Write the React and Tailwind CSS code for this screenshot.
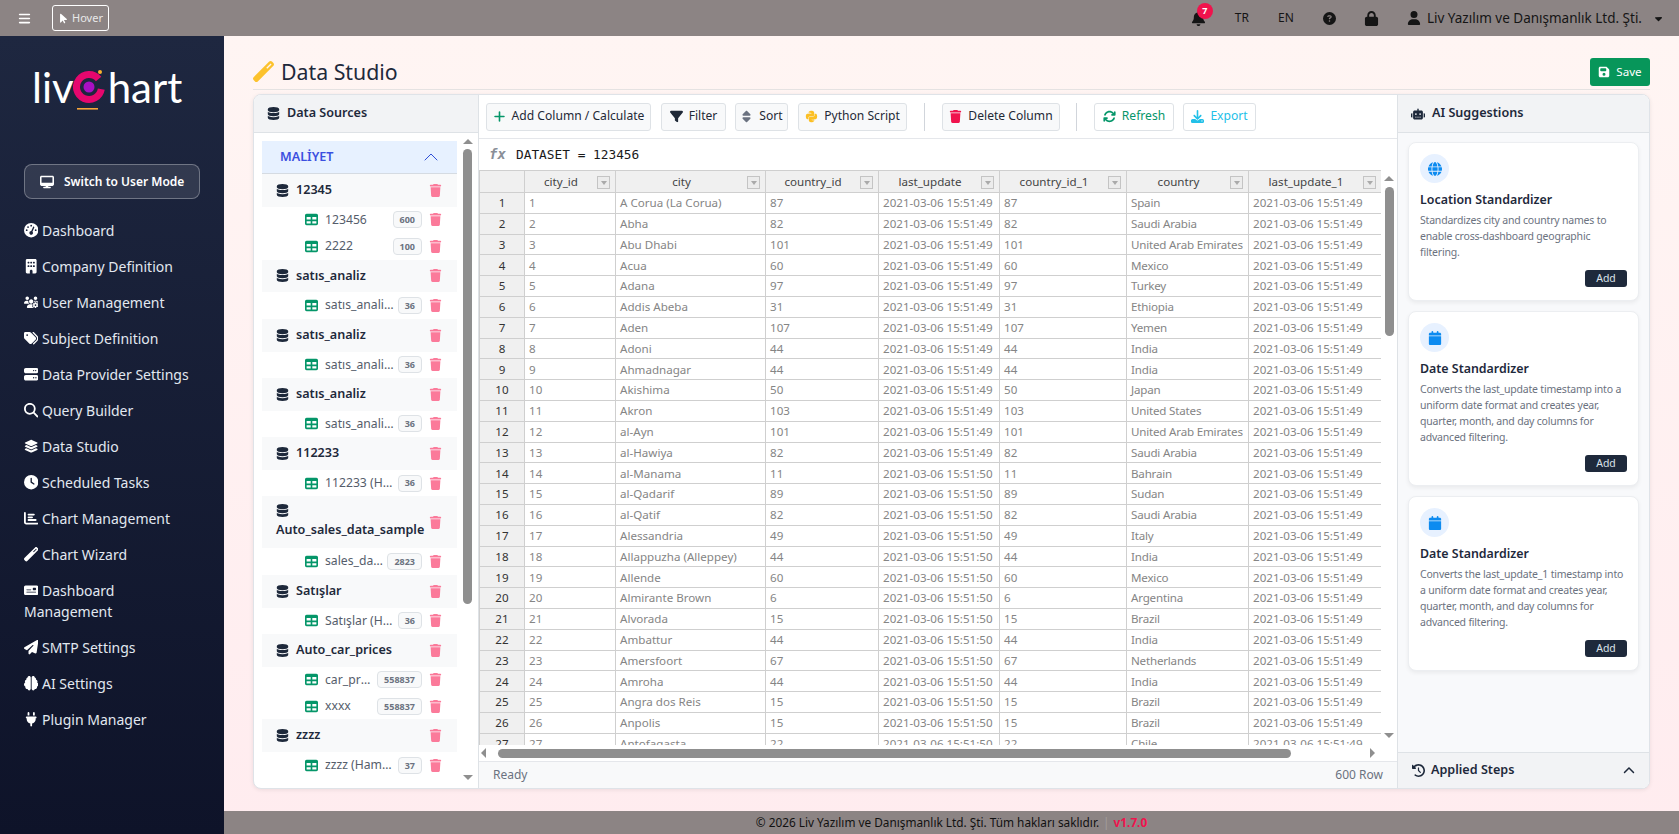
import React from 'react';
import {
  FaBars, FaArrowPointer, FaBell, FaCircleQuestion, FaLock, FaUser, FaCaretDown, FaDesktop,
  FaGaugeHigh, FaBuilding, FaUsersGear, FaTags, FaServer, FaMagnifyingGlass, FaLayerGroup, FaClock,
  FaChartBar, FaWandMagic, FaMoneyCheck, FaPaperPlane, FaBrain, FaPlug, FaDatabase, FaTrash, FaTable,
  FaPlus, FaFilter, FaSort, FaPython, FaArrowsRotate, FaDownload, FaFloppyDisk, FaRobot, FaGlobe,
  FaCalendar, FaClockRotateLeft, FaChevronUp,
} from 'react-icons/fa6';
import { ChevronUp } from 'lucide-react';

const navItems = [
  [FaGaugeHigh, 'Dashboard'],
  [FaBuilding, 'Company Definition'],
  [FaUsersGear, 'User Management'],
  [FaTags, 'Subject Definition'],
  [FaServer, 'Data Provider Settings'],
  [FaMagnifyingGlass, 'Query Builder'],
  [FaLayerGroup, 'Data Studio'],
  [FaClock, 'Scheduled Tasks'],
  [FaChartBar, 'Chart Management'],
  [FaWandMagic, 'Chart Wizard'],
  [FaMoneyCheck, 'Dashboard Management'],
  [FaPaperPlane, 'SMTP Settings'],
  [FaBrain, 'AI Settings'],
  [FaPlug, 'Plugin Manager'],
];

const sources = [
  { name: '12345', items: [['123456', '600'], ['2222', '100']] },
  { name: 'satıs_analiz', items: [['satıs_analiz (Ham Veri)', '36']] },
  { name: 'satıs_analiz', items: [['satıs_analiz (Ham Veri)', '36']] },
  { name: 'satıs_analiz', items: [['satıs_analiz (Ham Veri)', '36']] },
  { name: '112233', items: [['112233 (Ham Veri)', '36']] },
  { name: 'Auto_sales_data_sample', tall: true, items: [['sales_data_sample', '2823']] },
  { name: 'Satışlar', items: [['Satışlar (Ham Veri)', '36']] },
  { name: 'Auto_car_prices', items: [['car_prices_data', '558837'], ['xxxx', '558837']] },
  { name: 'zzzz', items: [['zzzz (Ham Veri)', '37']] },
];

const columns = ['city_id', 'city', 'country_id', 'last_update', 'country_id_1', 'country', 'last_update_1'];

const rows = [
  ['A Corua (La Corua)', 87, 'Spain'], ['Abha', 82, 'Saudi Arabia'], ['Abu Dhabi', 101, 'United Arab Emirates'],
  ['Acua', 60, 'Mexico'], ['Adana', 97, 'Turkey'], ['Addis Abeba', 31, 'Ethiopia'], ['Aden', 107, 'Yemen'],
  ['Adoni', 44, 'India'], ['Ahmadnagar', 44, 'India'], ['Akishima', 50, 'Japan'], ['Akron', 103, 'United States'],
  ['al-Ayn', 101, 'United Arab Emirates'], ['al-Hawiya', 82, 'Saudi Arabia'], ['al-Manama', 11, 'Bahrain'],
  ['al-Qadarif', 89, 'Sudan'], ['al-Qatif', 82, 'Saudi Arabia'], ['Alessandria', 49, 'Italy'],
  ['Allappuzha (Alleppey)', 44, 'India'], ['Allende', 60, 'Mexico'], ['Almirante Brown', 6, 'Argentina'],
  ['Alvorada', 15, 'Brazil'], ['Ambattur', 44, 'India'], ['Amersfoort', 67, 'Netherlands'], ['Amroha', 44, 'India'],
  ['Angra dos Reis', 15, 'Brazil'], ['Anpolis', 15, 'Brazil'], ['Antofagasta', 22, 'Chile'],
];

const suggestions = [
  {
    icon: FaGlobe,
    title: 'Location Standardizer',
    lines: ['Standardizes city and country names to', 'enable cross-dashboard geographic', 'filtering.'],
  },
  {
    icon: FaCalendar,
    title: 'Date Standardizer',
    lines: ['Converts the last_update timestamp into a', 'uniform date format and creates year,', 'quarter, month, and day columns for', 'advanced filtering.'],
  },
  {
    icon: FaCalendar,
    title: 'Date Standardizer',
    lines: ['Converts the last_update_1 timestamp into', 'a uniform date format and creates year,', 'quarter, month, and day columns for', 'advanced filtering.'],
  },
];

function Arrow({ dir }) {
  const cls = {
    up: 'border-x-[5px] border-b-[5px] border-x-transparent border-b-[#8f8f8f]',
    down: 'border-x-[5px] border-t-[5px] border-x-transparent border-t-[#8f8f8f]',
    left: 'border-y-[5px] border-r-[5px] border-y-transparent border-r-[#8f8f8f]',
    right: 'border-y-[5px] border-l-[5px] border-y-transparent border-l-[#8f8f8f]',
  }[dir];
  return <div className={`w-0 h-0 shrink-0 ${cls}`} />;
}

function Logo() {
  return (
    <div className="h-[128px] pt-[27px] pl-[32px] flex items-start text-white font-normal text-[42px] leading-[48px]" style={{ fontFamily: 'Lato, sans-serif' }}>
      <span>liv</span>
      <svg width="32" height="44" viewBox="0 0 32 44" className="shrink-0 mt-[5px] -ml-[1px] mr-[3px]">
        <path d="M25.6 11 A12.5 12.5 0 1 0 28.3 21.2" fill="none" stroke="#e6076e" strokeWidth="7" />
        <circle cx="16" cy="19" r="5.5" fill="#a80fc4" />
        <circle cx="27" cy="4" r="2" fill="#fbb32c" />
        <rect x="4" y="40" width="21" height="1.6" fill="#f7a63a" />
      </svg>
      <span>hart</span>
    </div>
  );
}

function Sidebar() {
  return (
    <aside className="w-[224px] shrink-0 bg-gradient-to-b from-[#1e2740] to-[#0e1329] text-[#e2e8f0]">
      <Logo />
      <button className="mx-6 w-[176px] h-[35px] flex items-center pl-[15px] gap-[10px] rounded-lg border border-white/30 bg-white/10 text-white font-semibold text-[12px]">
        <FaDesktop className="h-[14px] w-auto" />
        Switch to User Mode
      </button>
      <nav className="mt-[13px]">
        {navItems.map(([Icon, label]) => (
          <div key={label} className="px-6 py-[7.5px] text-[14px] leading-[21px]">
            <Icon className="inline h-[14.4px] w-auto align-[-2px] mr-[3.6px] text-white" />
            {label}
          </div>
        ))}
      </nav>
    </aside>
  );
}

function TopBar() {
  return (
    <header className="h-9 shrink-0 bg-[#8c8484] flex items-center text-[#151515]">
      <FaBars className="ml-[18px] h-[13px] w-auto text-white" />
      <button className="ml-[21px] w-[57px] h-[26px] flex items-center justify-center gap-[3px] rounded-[3px] border border-white text-[11px] text-[#e8e8e8]">
        <FaArrowPointer className="h-[11px] w-auto text-white" />
        Hover
      </button>
      <div className="ml-auto flex items-center pr-[15px] text-[13px]">
        <div className="relative mr-[28px]">
          <FaBell className="h-[15px] w-auto" />
          <span className="absolute -top-[8px] left-[6px] w-4 h-4 rounded-full bg-[#f0134d] text-white text-[9px] font-bold flex items-center justify-center">7</span>
        </div>
        <span className="w-[16px] mr-[28px] text-center text-[12px]">TR</span>
        <span className="w-[16px] mr-[29px] text-center text-[12px]">EN</span>
        <FaCircleQuestion className="h-[13px] w-auto mr-[28px]" />
        <FaLock className="h-[15px] w-auto mr-[28px]" />
        <FaUser className="h-[14px] w-auto mr-[6px]" />
        <span className="whitespace-nowrap text-[13.5px]">Liv Yazılım ve Danışmanlık Ltd. Şti.</span>
        <FaCaretDown className="ml-[11px] h-[11px] w-auto" />
      </div>
    </header>
  );
}

function SourceRow({ label, count }) {
  return (
    <div className="h-[26.4px] flex items-center pl-[43px] pr-[15px]">
      <FaTable className="h-[13px] w-auto shrink-0 text-[#059669]" />
      <span className="ml-[7px] flex-1 min-w-0 truncate text-[12.2px] text-[#555d6b]">{label}</span>
      <span className="ml-1 h-[17px] px-[6px] flex items-center shrink-0 rounded border border-[#dee2e6] bg-[#f8f9fa] text-[#6b7280] text-[9px] font-bold">{count}</span>
      <FaTrash className="ml-[7px] h-[13px] w-auto shrink-0 text-[#fb7a9a]" />
    </div>
  );
}

function SourcesPanel() {
  return (
    <section className="w-[225px] shrink-0 flex flex-col border-r border-[#dee2e6]">
      <div className="h-[38px] shrink-0 flex items-center gap-[7px] pl-[13px] bg-[#f2f3f5] border-b border-[#dee2e6] text-[#1e293b] font-semibold text-[12.6px]">
        <FaDatabase className="h-[13px] w-auto" />
        Data Sources
      </div>
      <div className="flex-1 min-h-0 flex">
        <div className="w-[203px] pl-2 pt-2 overflow-hidden">
          <div className="h-[33px] flex items-center justify-between pl-[18px] pr-[14px] bg-[#e7f1ff] border-b border-[#d5dbe2] text-[#3b4fe0] font-semibold text-[12.6px]">
            MALİYET
            <ChevronUp size={24} strokeWidth={1} className="text-[#2f4fd8]" />
          </div>
          {sources.map((src, i) => (
            <div key={i}>
              <div className={`${src.tall ? 'h-[52px]' : 'h-[32.8px]'} flex items-center pl-[14px] pr-[15px] bg-[#f8f9fa] text-[#1e293b] font-semibold text-[12.6px]`}>
                <div className="flex-1 min-w-0 flex flex-wrap items-center gap-y-[4px]">
                  <FaDatabase className="h-[13px] w-auto mr-[7px] shrink-0" />
                  <span className="whitespace-nowrap">{src.name}</span>
                </div>
                <FaTrash className="h-[13px] w-auto shrink-0 text-[#fb7a9a]" />
              </div>
              {src.items.map(([label, count], j) => <SourceRow key={j} label={label} count={count} />)}
            </div>
          ))}
        </div>
        <div className="flex-1 flex flex-col items-center pt-[6px] pb-[8px]">
          <Arrow dir="up" />
          <div className="mt-[5px] w-[9px] h-[455px] rounded-full bg-[#8f8f8f]" />
          <div className="flex-1" />
          <Arrow dir="down" />
        </div>
      </div>
    </section>
  );
}

const toolBtn = 'h-[28px] flex items-center justify-center gap-[6px] rounded-[3px] border border-[#dee2e6] text-[12.1px] whitespace-nowrap';

function Toolbar() {
  return (
    <div className="h-[44px] shrink-0 flex items-center pl-[7px] border-b border-[#e5e7eb] text-[#1f2937]">
      <button className={`${toolBtn} w-[165px] bg-[#f8f9fa]`}><FaPlus className="h-[13px] w-auto text-[#059669]" />Add Column / Calculate</button>
      <button className={`${toolBtn} w-[65px] ml-[10px] bg-[#f8f9fa]`}><FaFilter className="h-[13px] w-auto" />Filter</button>
      <button className={`${toolBtn} w-[53px] ml-[9px] gap-[4px] bg-[#f8f9fa]`}><FaSort className="h-[13px] w-auto text-[#6b7280]" />Sort</button>
      <button className={`${toolBtn} w-[109px] ml-[10px] bg-[#f8f9fa]`}><FaPython className="h-[13px] w-auto text-[#fbbf24]" />Python Script</button>
      <div className="w-px h-[28px] ml-[17px] bg-[#d1d5db]" />
      <button className={`${toolBtn} w-[118px] ml-[17px] bg-[#f8f9fa]`}><FaTrash className="h-[13px] w-auto text-[#f0134d]" />Delete Column</button>
      <div className="w-px h-[28px] ml-[16px] bg-[#d1d5db]" />
      <button className={`${toolBtn} w-[80px] ml-[17px] bg-white text-[#059669]`}><FaArrowsRotate className="h-[13px] w-auto" />Refresh</button>
      <button className={`${toolBtn} w-[73px] ml-[9px] bg-white text-[#22c0e8]`}><FaDownload className="h-[13px] w-auto" />Export</button>
    </div>
  );
}

function HeadCell({ name }) {
  return (
    <div className="relative bg-[#f0f0f0] border-r border-b border-[#cfcfcf] flex items-center justify-center pr-[18px] text-[11.6px] text-[#444]">
      {name}
      <span className="absolute right-[5px] top-[5px] w-[13px] h-[13px] flex items-center justify-center border border-[#c4c4c4] bg-[#ececec]">
        <span className="w-0 h-0 border-x-[3px] border-t-[4px] border-x-transparent border-t-[#aaa]" />
      </span>
    </div>
  );
}

function DataGrid() {
  const cell = 'border-r border-b border-[#cfcfcf] pl-[4px] whitespace-nowrap overflow-hidden flex items-center text-[11.6px] text-[#858585]';
  return (
    <div className="flex-1 min-w-0 h-full overflow-hidden border-t border-l border-[#cfcfcf]">
      <div className="grid grid-cols-[45px_91px_150px_113px_121px_127px_122px_133px] grid-rows-[22px] auto-rows-[20.8px]">
        <div className="bg-[#f0f0f0] border-r border-b border-[#cfcfcf]" />
        {columns.map((c) => <HeadCell key={c} name={c} />)}
        {rows.map(([city, country_id, country], i) => {
          const stamp = i < 13 ? '2021-03-06 15:51:49' : '2021-03-06 15:51:50';
          return (
            <React.Fragment key={i}>
              <div className="bg-[#f0f0f0] border-r border-b border-[#cfcfcf] flex items-center justify-center text-[11.6px] text-[#333]">{i + 1}</div>
              <div className={cell}>{i + 1}</div>
              <div className={cell}>{city}</div>
              <div className={cell}>{country_id}</div>
              <div className={cell}>{stamp}</div>
              <div className={cell}>{country_id}</div>
              <div className={`${cell} tracking-[-0.2px]`}>{country}</div>
              <div className={cell}>2021-03-06 15:51:49</div>
            </React.Fragment>
          );
        })}
      </div>
    </div>
  );
}

function EditorPanel() {
  return (
    <section className="flex-1 min-w-0 flex flex-col">
      <Toolbar />
      <div className="h-[31px] shrink-0 flex items-center pl-[10px]">
        <span className="font-bold italic text-[#8a8f98] text-[14px] w-[27px]" style={{ fontFamily: '"DejaVu Sans Mono", monospace' }}>fx</span>
        <span className="text-[12.8px] text-[#1a1a1a] whitespace-pre" style={{ fontFamily: '"DejaVu Sans Mono", monospace' }}>DATASET = 123456</span>
      </div>
      <div className="h-[575px] shrink-0 flex">
        <DataGrid />
        <div className="w-4 shrink-0 flex flex-col items-center pt-[6px] pb-[7px]">
          <Arrow dir="up" />
          <div className="mt-[6px] w-[9px] h-[149px] rounded-full bg-[#8f8f8f]" />
          <div className="flex-1" />
          <Arrow dir="down" />
        </div>
      </div>
      <div className="h-4 shrink-0 flex items-center pl-[2px] pr-[22px]">
        <Arrow dir="left" />
        <div className="ml-[12px] w-[793px] h-[9px] rounded-full bg-[#8f8f8f]" />
        <div className="flex-1" />
        <Arrow dir="right" />
      </div>
      <div className="flex-1 flex items-center justify-between pl-[14px] pr-[14px] bg-[#f8f9fa] border-t border-[#e5e7eb] text-[12px] text-[#6b7280]">
        <span>Ready</span>
        <span>600 Row</span>
      </div>
    </section>
  );
}

function SuggestionCard({ icon: Icon, title, lines }) {
  return (
    <div className="rounded-lg border border-[#eceef1] bg-white px-[11px] pt-[11px] pb-[13px] shadow-[0_2px_4px_rgba(0,0,0,0.06)]">
      <div className="w-[29px] h-[29px] rounded-full bg-[#e7f1ff] flex items-center justify-center text-[#0d8bf0]">
        <Icon className="h-[14px] w-auto" />
      </div>
      <div className="mt-[8px] text-[12.4px] leading-[17px] font-semibold text-[#1e293b]">{title}</div>
      <div className="mt-[4px] text-[10.5px] tracking-[-0.2px] leading-[16px] text-[#6b7280]">
        {lines.map((l) => <div key={l} className="whitespace-nowrap">{l}</div>)}
      </div>
      <div className="mt-[10px] flex justify-end">
        <button className="w-[42px] h-[17px] rounded-[3px] bg-[#1e293b] text-[#dbe2ea] text-[10.5px] leading-none">Add</button>
      </div>
    </div>
  );
}

function SuggestionsPanel() {
  return (
    <section className="w-[252px] shrink-0 flex flex-col border-l border-[#dee2e6] bg-[#f8f9fb]">
      <div className="h-[38px] shrink-0 flex items-center gap-[7px] pl-[13px] bg-[#f2f3f5] border-b border-[#dee2e6] text-[#1e293b] font-semibold text-[12.6px]">
        <FaRobot className="h-[14px] w-auto" />
        AI Suggestions
      </div>
      <div className="flex-1 px-[10px] pt-[9px] flex flex-col gap-[10px]">
        {suggestions.map((s, i) => <SuggestionCard key={i} {...s} />)}
      </div>
      <div className="h-[36px] shrink-0 flex items-center pl-[14px] pr-[14px] gap-[6px] bg-[#f2f3f5] border-t border-[#dee2e6] text-[#1e293b] font-semibold text-[12.6px]">
        <FaClockRotateLeft className="h-[13px] w-auto" />
        Applied Steps
        <FaChevronUp className="h-[12px] w-auto ml-auto" />
      </div>
    </section>
  );
}

export default function App() {
  return (
    <div className="w-[1679px] h-[834px] overflow-hidden flex flex-col" style={{ fontFamily: '"Noto Sans", sans-serif' }}>
      <TopBar />
      <div className="flex-1 min-h-0 flex">
        <Sidebar />
        <div className="flex-1 min-w-0 flex flex-col bg-gradient-to-b from-[#fff5f3] to-[#ffecef]">
          <main className="flex-1 min-h-0 px-[29px]">
            <div className="h-[54px] flex items-center border-b border-[#e5e2e2] pt-[18px]">
              <FaWandMagic className="h-[21px] w-auto text-[#fcc22d]" />
              <h1 className="ml-[7px] text-[21.3px] font-normal text-[#1e293b]">Data Studio</h1>
              <button className="ml-auto w-[60px] h-[28px] flex items-center justify-center gap-[6px] rounded-[3px] bg-[#07965a] text-white text-[11.6px]">
                <FaFloppyDisk className="h-[12px] w-auto" />
                Save
              </button>
            </div>
            <div className="mt-[4px] h-[695px] flex overflow-hidden rounded-lg border border-[#dfe3e8] bg-white shadow-[0_1px_4px_rgba(0,0,0,0.08)]">
              <SourcesPanel />
              <EditorPanel />
              <SuggestionsPanel />
            </div>
          </main>
          <footer className="h-[23px] shrink-0 bg-[#8c8484] flex items-center justify-center text-[11.8px] text-[#111]">
            © 2026 Liv Yazılım ve Danışmanlık Ltd. Şti. Tüm hakları saklıdır.
            <span className="ml-[4px] text-[#a39c9c]">|</span>
            <span className="ml-[4px] font-bold text-[#f0134d]">v1.7.0</span>
          </footer>
        </div>
      </div>
    </div>
  );
}
